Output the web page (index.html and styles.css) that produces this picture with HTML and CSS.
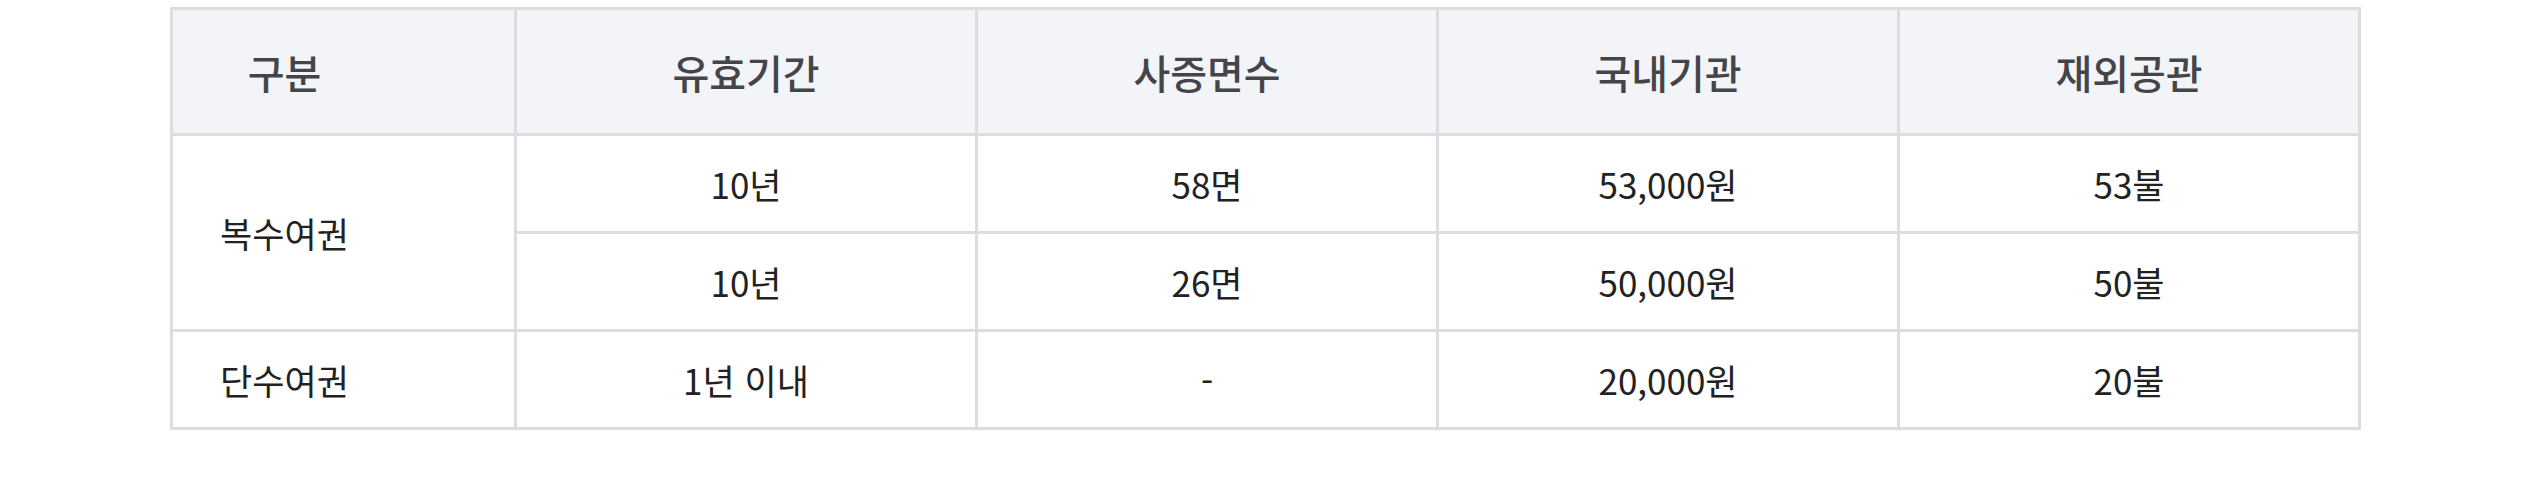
FILE: index.html
```html
<!DOCTYPE html>
<html lang="ko">
<head>
<meta charset="utf-8">
<title>여권 발급 수수료</title>
<link rel="stylesheet" href="styles.css">
</head>
<body>
<div class="wrap">
  <table class="fee-table">
    <colgroup>
      <col class="c-first">
      <col class="c-rest">
      <col class="c-rest">
      <col class="c-rest">
      <col class="c-rest">
    </colgroup>
    <thead>
      <tr>
        <th class="first">구분</th>
        <th>유효기간</th>
        <th>사증면수</th>
        <th>국내기관</th>
        <th>재외공관</th>
      </tr>
    </thead>
    <tbody>
      <tr>
        <td class="first" rowspan="2">복수여권</td>
        <td>10년</td>
        <td>58면</td>
        <td>53,000원</td>
        <td>53불</td>
      </tr>
      <tr>
        <td>10년</td>
        <td>26면</td>
        <td>50,000원</td>
        <td>50불</td>
      </tr>
      <tr>
        <td class="first">단수여권</td>
        <td>1년 이내</td>
        <td>-</td>
        <td>20,000원</td>
        <td>20불</td>
      </tr>
    </tbody>
  </table>
</div>
</body>
</html>
```

FILE: styles.css
```css
html, body {
  margin: 0;
  padding: 0;
  background: #ffffff;
}

body {
  font-family: "Noto Sans CJK KR", "Noto Sans", sans-serif;
}

.wrap {
  padding: 7px 0 0 170px;
}

.fee-table {
  width: 2191px;
  table-layout: fixed;
  border-collapse: separate;
  border-spacing: 0;
  border-top: 3px solid #dcdde0;
  border-left: 3px solid #dcdde0;
}

.c-first {
  width: 344px;
}

.c-rest {
  width: 461px;
}

.fee-table th,
.fee-table td {
  padding: 0;
  text-align: center;
  vertical-align: middle;
  border-right: 3px solid #dcdde0;
  border-bottom: 3px solid #dcdde0;
}

.fee-table th {
  height: 123px;
  background: #f3f4f7;
  color: #444549;
  font-size: 40px;
  font-weight: 500;
}

.fee-table td {
  height: 95px;
  color: #222222;
  font-size: 35px;
  font-weight: 400;
}

.fee-table .first {
  padding-right: 118px;
}
```
